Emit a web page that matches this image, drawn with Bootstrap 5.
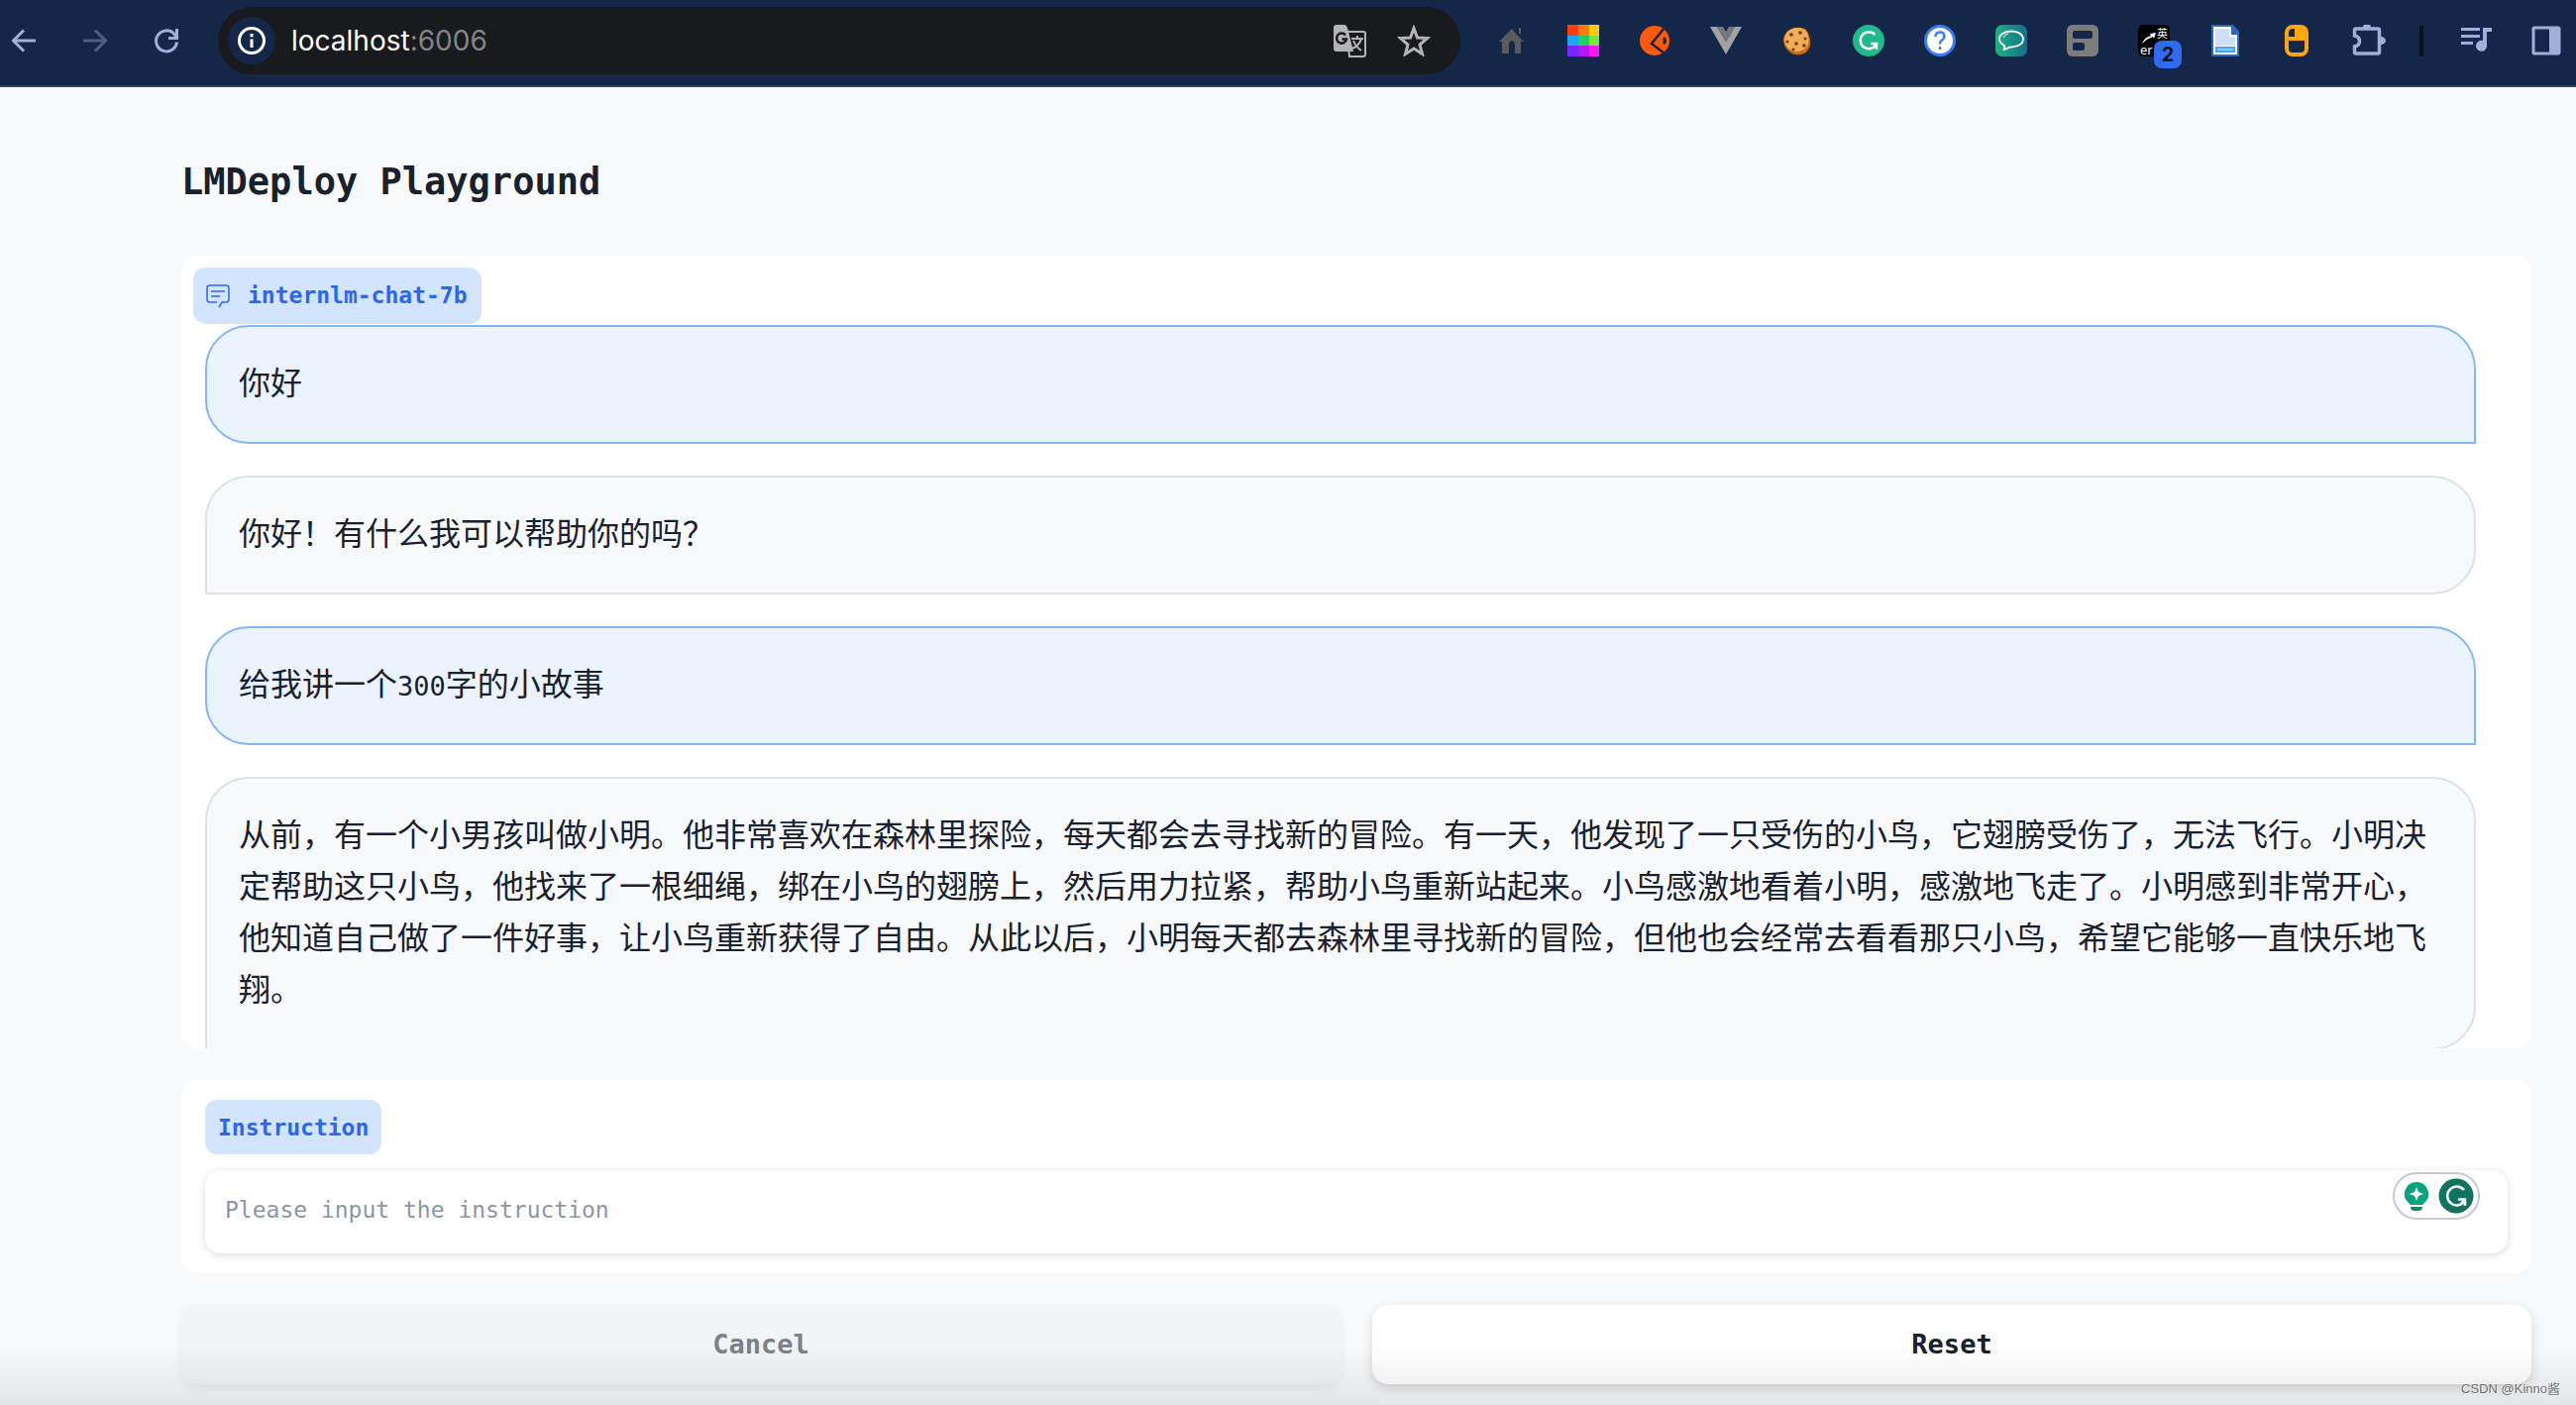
<!DOCTYPE html>
<html lang="zh-CN">
<head>
<meta charset="utf-8">
<meta name="viewport" content="width=device-width, initial-scale=1">
<title>LMDeploy Playground</title>
<link href="https://cdn.jsdelivr.net/npm/bootstrap@5.3.0/dist/css/bootstrap.min.css" rel="stylesheet">
<style>
  :root { --ink: #19212e; --mono: "DejaVu Sans Mono", "Noto Sans CJK SC", monospace; }
  body { background: #f8f9fb; color: var(--ink); font-family: var(--mono); }
  svg { display: block; flex: none; }

  /* browser toolbar */
  .toolbar { height: 88px; gap: 36px; padding: 0 14px 4px 8px; background: #152748; border-bottom: 2px solid #2c4266; }
  .tool-group { gap: 40px; }
  .tool-btn { width: 32px; height: 32px; padding: 0; border: 0; background: none; color: #9db0d8; position: relative; flex: none; }
  .tool-btn:disabled { color: #4c5f86; }
  .omnibox { height: 68px; border-radius: 34px; background: #191a1d; padding: 0 32px 0 10px; }
  .site-info { width: 48px; height: 48px; border-radius: 50%; background: #152748; color: #fff; }
  .address { font: 28px/40px Inter, "Liberation Sans", sans-serif; margin-left: 16px; color: #fff; }
  .address span { color: #858585; }
  .tool-sep { width: 4px; height: 32px; border-radius: 2px; background: #0a1220; }
  .count-badge { position: absolute; left: 16px; top: 16px; width: 28px; height: 28px; border-radius: 8px; background: #2f6bf0; color: #10131a; font: 700 20px/28px Inter, sans-serif; text-align: center; }

  /* playground */
  .playground { padding: 72px 45px 16px 183px; }
  .page-title { font-size: 37px; line-height: 48px; font-weight: 700; margin-bottom: 50px; }
  .panel { background: #fff; border-radius: 16px; }
  .chat-panel { height: 800px; padding-top: 12px; margin-bottom: 32px; }
  .tag-label { width: fit-content; height: 56px; padding: 0 13px; border-radius: 12px; background: #d3e4ff; color: #2a66f4; font-size: 23px; line-height: 32px; font-weight: 700; }
  .chat-label { margin: 0 0 2px 12px; gap: 18px; box-shadow: 1px 1px 0 #dcdfe8; }
  .messages { gap: 32px; padding: 0 56px 0 24px; }
  .bubble { border: 2px solid #dee1e8; border-radius: 44px; background: #f8f9fb; padding: 28px 32px 36px; font: 32px/52px "Noto Sans CJK SC", sans-serif; }
  .bubble-user { border-color: #80b6fc; background: #ebf3ff; border-bottom-right-radius: 0; }
  .bubble-bot { border-bottom-left-radius: 0; }
  .bubble-num { font-family: var(--mono); font-size: 27px; line-height: 1; }
  .prompt-panel { padding: 20px 24px; margin-bottom: 32px; }
  .prompt-panel .tag-label { height: 55px; margin-bottom: 16px; }
  .prompt-input { height: 84px; padding: 0 20px 4px; border: 0; border-radius: 16px; font-size: 23px; box-shadow: 0 2px 8px rgba(0,0,0,.14); }
  .prompt-input::placeholder { color: #8d95a5; }
  .assist { position: absolute; right: 28px; top: 2px; width: 88px; height: 48px; border: 2px solid #c3c8dc; border-radius: 24px; background: #fff; padding: 0 4px 0 8px; }
  .actions { gap: 32px; }
  .action-btn { height: 80px; border: 0; border-radius: 16px; background: #fff; color: var(--ink); font-size: 27px; font-weight: 700; box-shadow: 0 4px 12px rgba(0,0,0,.14); }
  .action-btn:disabled { background: #f3f4f6; color: #7d8087; border: 0; opacity: 1; box-shadow: 0 4px 12px rgba(0,0,0,.06); }
  .bottom-fade { height: 60px; pointer-events: none; background: linear-gradient(rgba(0,0,0,0), rgba(0,0,0,.08)); }
  .watermark { position: fixed; right: 16px; bottom: 6px; font: 13px/20px "Liberation Sans", "Noto Sans CJK SC", sans-serif; color: #777; text-shadow: 1px 1px 0 #fff; }
</style>
<script src="https://cdn.jsdelivr.net/npm/bootstrap@5.3.0/dist/js/bootstrap.bundle.min.js"></script>
</head>
<body>
<header class="toolbar d-flex align-items-center">
  <div class="tool-group d-flex">
    <button class="tool-btn" aria-label="Back"><svg width="32" height="32" fill="none" stroke="currentColor" stroke-width="3"><path d="M28 16H6M16 5.500 5.500 16 16 26.500"/></svg></button>
    <button class="tool-btn" aria-label="Forward" disabled><svg width="32" height="32" fill="none" stroke="currentColor" stroke-width="3"><path d="M4 16h22M16 5.500 26.500 16 16 26.500"/></svg></button>
    <button class="tool-btn" aria-label="Reload"><svg width="32" height="32" fill="none" stroke="currentColor" stroke-width="3"><path d="M26.500 17.500A10.500 10.500 0 1 1 24 9.500l2 3"/><path d="M26.500 4v9.500H18" /></svg></button>
  </div>
  <div class="omnibox d-flex align-items-center flex-grow-1">
    <div class="site-info d-flex align-items-center justify-content-center"><svg width="28" height="28" fill="none" stroke="currentColor"><circle cx="14" cy="14" r="12.500" stroke-width="3"/><path d="M14 12.500V21M14 7v3.200" stroke-width="3"/></svg></div>
    <div class="address me-auto">localhost<span>:6006</span></div>
    <div class="d-flex align-items-center gap-4">
      <button class="tool-btn" aria-label="Translate"><svg width="33" height="33" fill="none"><path d="M13 7h17a2 2 0 0 1 2 2v21a2 2 0 0 1-2 2H16z" stroke="#b4b4b4" stroke-width="2"/><path d="M18 14h12M24 11v3M28 14c-1 5-5 8-9 10M20 16c2 5 5 8 8 10" stroke="#b4b4b4" stroke-width="2"/><path d="M3 0h8c1 0 2 1 3 3l6 24H3a3 3 0 0 1-3-3V3a3 3 0 0 1 3-3z" fill="#b4b4b4"/><path d="M12 10.500A5 5 0 1 0 13 14.500H8.500" stroke="#191a1d" stroke-width="2.500"/></svg></button>
      <button class="tool-btn ms-2" aria-label="Bookmark"><svg width="34" height="32" fill="none" stroke="#b4b4b4" stroke-width="3"><path d="m17 3.500 3.500 9.500 10 .5-7.500 6.500 2.500 9.500-8.500-5.500-8.500 5.500 2.500-9.500-7.500-6.500 10-.5z"/></svg></button>
    </div>
  </div>
  <div class="tool-group d-flex">
    <button class="tool-btn" aria-label="Home"><svg width="32" height="32"><path d="M16 4 3 17h3v12h7V19q3-6 6 0v10h6V17h3l-5-5z" fill="#5b5b5b"/><path d="M23 3h2v6h-2z" fill="#5b5b5b"/></svg></button>
    <button class="tool-btn" aria-label="Colours"><svg width="32" height="32"><path fill="#ff3d0c" d="M0 0h11v11H0z"/><path fill="#ff7c0a" d="M11 0h11v11H11z"/><path fill="#ffcb0c" d="M22 0h10v11H22z"/><path fill="#18a8ff" d="M0 11h11v10H0z"/><path fill="#1bd15a" d="M11 11h11v10H11z"/><path fill="#78e83f" d="M22 11h10v10H22z"/><path fill="#7724f9" d="M0 21h11v11H0z"/><path fill="#b118f6" d="M11 21h11v11H11z"/><path fill="#f916f9" d="M22 21h10v11H22z"/></svg></button>
    <button class="tool-btn" aria-label="Interceptor"><svg width="32" height="32" fill="none"><circle cx="16" cy="16" r="15" fill="#ff5a0c"/><path d="M26 3 13 19l13 10" stroke="#152748" stroke-width="2.500"/><path d="M25 13q3 3 0 6" stroke="#152748" stroke-width="3"/></svg></button>
    <button class="tool-btn" aria-label="Vue devtools"><svg width="32" height="32"><path fill="#a2a2a2" d="M0 2h7l9 15 9-15h7L16 30z"/><path fill="#777" d="M7 2h6l3 5 3-5h6l-9 15z"/></svg></button>
    <button class="tool-btn" aria-label="Cookies"><svg width="32" height="32"><path fill="#c96c14" d="M14 3q12-2 14 8 4 12-5 18-9 3-14-1-7-5-7-13 1-10 12-12z"/><path fill="#f0ae52" d="M14 3q11-1 13 8 2 10-4 14-8 4-13 1-7-4-7-11 1-10 11-12z"/><g fill="#6d3410"><circle cx="10" cy="10" r="1.800"/><circle cx="19" cy="8" r="1.800"/><circle cx="6" cy="17" r="1.500"/><circle cx="15" cy="19" r="1.800"/><circle cx="24" cy="14" r="1.500"/><circle cx="23" cy="21" r="1.800"/><circle cx="12" cy="25" r="1.500"/></g></svg></button>
    <button class="tool-btn" aria-label="Grammar check"><svg width="32" height="32" fill="none"><circle cx="16" cy="16" r="16" fill="#1fb98b"/><path d="M22.500 10A8.500 8.500 0 1 0 24 19h-5.500M24 19v6" stroke="#fff" stroke-width="2.500"/></svg></button>
    <button class="tool-btn" aria-label="Help"><svg width="32" height="32" fill="none"><circle cx="16" cy="16" r="14.500" fill="#fff" stroke="#3b7cf5" stroke-width="3"/><path d="M11.500 12q0-4.500 4.500-4.500t4.500 4q0 2.500-2.500 4-2 1.500-2 4M16 22v3" stroke="#3b7cf5" stroke-width="2.500"/></svg></button>
    <button class="tool-btn" aria-label="Chat"><svg width="32" height="32" fill="none"><defs><linearGradient id="teal"><stop stop-color="#21b183"/><stop offset="1" stop-color="#146f86"/></linearGradient></defs><rect width="32" height="32" rx="7" fill="url(#teal)"/><path d="M9 21Q4 18 4 14.500C4 10 9 6.500 16 6.500S28 10 28 14.500 23 22 15 22.500l-7 3q2-2 1-4.500z" stroke="#fff" stroke-width="1.800"/><path d="M8 13q1-3 5-4" stroke="#fff"/></svg></button>
    <button class="tool-btn" aria-label="Layout"><svg width="32" height="32"><rect width="32" height="32" rx="6" fill="#7c7c7c"/><rect x="6" y="6" width="20" height="8" rx="2" fill="#152748"/><rect x="6" y="18" width="12" height="8" rx="2" fill="#152748"/></svg></button>
    <button class="tool-btn" aria-label="Dictionary"><svg width="32" height="32"><rect width="32" height="32" rx="5" fill="#000"/><path d="M4 19q2-6 9-8l-1-2 6-1-2 6-1-2q-6 2-11 7z" fill="#fff"/><text x="19" y="13" font-size="11" fill="#fff" font-family="Noto Sans CJK SC">英</text><text x="2" y="30" font-size="13" fill="#fff" font-family="Noto Sans">er</text></svg><span class="count-badge">2</span></button>
    <button class="tool-btn" aria-label="Document"><svg width="32" height="32"><path d="M2 0h22l6 7v25H2z" fill="#2e68be"/><path d="M4 2h18v8h6v20H4z" fill="#fff"/><path d="M6 4h14v8h6v9H6z" fill="#ccdffb"/><path d="M6 22h20v6H6z" fill="#45a8f5"/><path d="M8 25h16" stroke="#8ccbff" stroke-width="2"/></svg></button>
    <button class="tool-btn" aria-label="Mouse gestures"><svg width="32" height="32"><rect x="4" width="24" height="32" rx="8" fill="#ffa60c"/><path d="M8 12V8q0-4 4-4h2v8z" fill="#152748"/><path d="M8 16h16v8q0 4-4 4h-8q-4 0-4-4z" fill="#152748"/></svg></button>
    <button class="tool-btn" aria-label="Extensions"><svg width="34" height="32" fill="none"><path d="M4 4h22a1.500 1.500 0 0 1 1.500 1.500v22A1.500 1.500 0 0 1 26 29H4a1.500 1.500 0 0 1-1.500-1.500V22q5-1 5-5.500t-5-5.500V5.500A1.500 1.500 0 0 1 4 4z" stroke="currentColor" stroke-width="3.500"/><path d="M11 3a4 5 0 0 1 8 0zM29 12a5 4 0 0 1 0 8z" fill="currentColor"/></svg></button>
  </div>
  <div class="tool-sep"></div>
  <div class="tool-group d-flex">
    <button class="tool-btn" aria-label="Media"><svg width="34" height="32" fill="currentColor"><path d="M2 3h19v3H2zM2 10h19v3H2zM2 17h12v3H2zM24 3h9v4h-5v14a5.500 5.500 0 1 1-4-5z"/></svg></button>
    <button class="tool-btn" aria-label="Side panel"><svg width="32" height="32" fill="none"><rect x="3" y="3" width="26" height="26" rx="1" stroke="currentColor" stroke-width="3"/><path d="M19 3h10v26H19z" fill="currentColor"/></svg></button>
  </div>
</header>

<main class="playground">
  <h1 class="page-title">LMDeploy Playground</h1>

  <section class="panel chat-panel overflow-hidden">
    <div class="tag-label chat-label d-flex align-items-center">
      <svg width="24" height="30" fill="none" stroke="currentColor" stroke-width="1.500"><path d="M11 22H4a3 3 0 0 1-3-3V8a3 3 0 0 1 3-3h16a3 3 0 0 1 3 3v11a3 3 0 0 1-3 3h-4l-3 5M5 11h14M5 16h9"/></svg>
      <span>internlm-chat-7b</span>
    </div>
    <div class="messages d-flex flex-column">
      <div class="bubble bubble-user">你好</div>
      <div class="bubble bubble-bot">你好！有什么我可以帮助你的吗？</div>
      <div class="bubble bubble-user">给我讲一个<span class="bubble-num">300</span>字的小故事</div>
      <div class="bubble bubble-bot">从前，有一个小男孩叫做小明。他非常喜欢在森林里探险，每天都会去寻找新的冒险。有一天，他发现了一只受伤的小鸟，它翅膀受伤了，无法飞行。小明决定帮助这只小鸟，他找来了一根细绳，绑在小鸟的翅膀上，然后用力拉紧，帮助小鸟重新站起来。小鸟感激地看着小明，感激地飞走了。小明感到非常开心，他知道自己做了一件好事，让小鸟重新获得了自由。从此以后，小明每天都去森林里寻找新的冒险，但他也会经常去看看那只小鸟，希望它能够一直快乐地飞翔。</div>
    </div>
  </section>

  <section class="panel prompt-panel">
    <label for="instruction" class="tag-label d-flex align-items-center">Instruction</label>
    <div class="position-relative">
      <input id="instruction" type="text" class="form-control prompt-input" placeholder="Please input the instruction">
      <div class="assist d-flex align-items-center justify-content-between">
        <svg width="28" height="34"><path d="M14 3a12 12 0 0 1 8 21l-2 2H8l-2-2A12 12 0 0 1 14 3z" fill="#0aa37f"/><path d="m14 8 2 5 5 2-5 2-2 5-2-5-5-2 5-2z" fill="#fff"/><path d="M8 28h12q0 4-4 4h-4q-4 0-4-4z" fill="#13866c"/></svg>
        <svg width="36" height="36" fill="none"><circle cx="18" cy="18" r="17.500" fill="#107360"/><path d="M26 12a9.500 9.500 0 1 0 0 12M20 21.500h7V28M27 22l-4 4" stroke="#fff" stroke-width="2.500"/></svg>
      </div>
    </div>
  </section>

  <div class="actions d-flex">
    <button class="btn action-btn flex-fill w-50" disabled>Cancel</button>
    <button class="btn action-btn flex-fill w-50">Reset</button>
  </div>
</main>
<div class="bottom-fade fixed-bottom"></div>
<div class="watermark">CSDN @Kinno酱</div>
</body>
</html>
